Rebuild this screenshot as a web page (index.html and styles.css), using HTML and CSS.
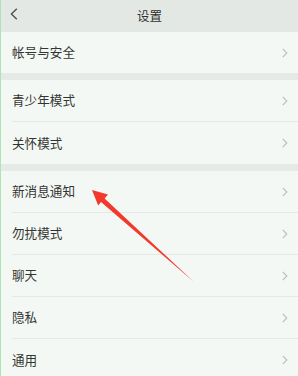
FILE: index.html
```html
<!DOCTYPE html>
<html lang="zh-CN">
<head>
<meta charset="utf-8">
<title>设置</title>
<link rel="stylesheet" href="styles.css">
</head>
<body>
<div class="screen">
  <header class="topbar">
    <svg class="back" width="8" height="12" viewBox="0 0 8 12"><path d="M6.8 0.8 L1.4 6 L6.8 11.2" fill="none" stroke="#4a4d4a" stroke-width="1.3"/></svg>
    <h1 class="title">设置</h1>
  </header>

  <section class="group first">
    <div class="row"><span class="label">帐号与安全</span><svg class="chev" width="6" height="10" viewBox="0 0 6 10"><path d="M0.8 0.8 L4.8 5 L0.8 9.2" fill="none" stroke="#b9bcb9" stroke-width="1.1"/></svg></div>
  </section>

  <section class="group">
    <div class="row"><span class="label">青少年模式</span><svg class="chev" width="6" height="10" viewBox="0 0 6 10"><path d="M0.8 0.8 L4.8 5 L0.8 9.2" fill="none" stroke="#b9bcb9" stroke-width="1.1"/></svg></div>
    <div class="row"><span class="label">关怀模式</span><svg class="chev" width="6" height="10" viewBox="0 0 6 10"><path d="M0.8 0.8 L4.8 5 L0.8 9.2" fill="none" stroke="#b9bcb9" stroke-width="1.1"/></svg></div>
  </section>

  <section class="group">
    <div class="row"><span class="label">新消息通知</span><svg class="chev" width="6" height="10" viewBox="0 0 6 10"><path d="M0.8 0.8 L4.8 5 L0.8 9.2" fill="none" stroke="#b9bcb9" stroke-width="1.1"/></svg></div>
    <div class="row"><span class="label">勿扰模式</span><svg class="chev" width="6" height="10" viewBox="0 0 6 10"><path d="M0.8 0.8 L4.8 5 L0.8 9.2" fill="none" stroke="#b9bcb9" stroke-width="1.1"/></svg></div>
    <div class="row"><span class="label">聊天</span><svg class="chev" width="6" height="10" viewBox="0 0 6 10"><path d="M0.8 0.8 L4.8 5 L0.8 9.2" fill="none" stroke="#b9bcb9" stroke-width="1.1"/></svg></div>
    <div class="row"><span class="label">隐私</span><svg class="chev" width="6" height="10" viewBox="0 0 6 10"><path d="M0.8 0.8 L4.8 5 L0.8 9.2" fill="none" stroke="#b9bcb9" stroke-width="1.1"/></svg></div>
    <div class="row"><span class="label">通用</span><svg class="chev" width="6" height="10" viewBox="0 0 6 10"><path d="M0.8 0.8 L4.8 5 L0.8 9.2" fill="none" stroke="#b9bcb9" stroke-width="1.1"/></svg></div>
  </section>

  <svg class="pointer" width="298" height="376" viewBox="0 0 298 376">
    <polygon points="92,190 108,194.6 104.6,198.4 194,282 101,202 98.2,205.6" fill="#f2392c"/>
  </svg>
</div>
</body>
</html>
```

FILE: styles.css
```css
html, body {
  margin: 0;
  padding: 0;
}
body {
  background: #f4f8f4;
  font-family: "Noto Sans CJK SC", "Noto Sans", sans-serif;
  color: #333533;
}
.screen {
  position: relative;
  width: 298px;
  height: 376px;
  overflow: hidden;
  box-sizing: border-box;
  border-left: 1px solid #aee3b6;
  background: #e6eae6;
  display: flex;
  flex-direction: column;
}
.topbar {
  height: 32px;
  flex: none;
  display: flex;
  align-items: center;
  justify-content: center;
  position: relative;
  background: #e4e8e4;
}
.back {
  position: absolute;
  left: 9px;
  top: 8px;
}
.title {
  margin: 0;
  font-size: 12.5px;
  font-weight: normal;
  color: #2e302e;
  line-height: 1;
}
.group {
  background: #f4f8f4;
  margin-top: 7px;
  flex: none;
}
.group.first {
  margin-top: 0;
}
.row {
  height: 42px;
  margin-left: 11px;
  padding-right: 10px;
  display: flex;
  align-items: center;
  justify-content: space-between;
  box-sizing: border-box;
  border-bottom: 1px solid #e4e9e4;
}
.group.first .row {
  height: 41px;
}
.row:last-child {
  border-bottom: none;
}
.label {
  font-size: 12.6px;
  line-height: 1;
  color: #333533;
}
.chev {
  flex: none;
}
.pointer {
  position: absolute;
  left: -1px;
  top: 0;
  pointer-events: none;
}
```
